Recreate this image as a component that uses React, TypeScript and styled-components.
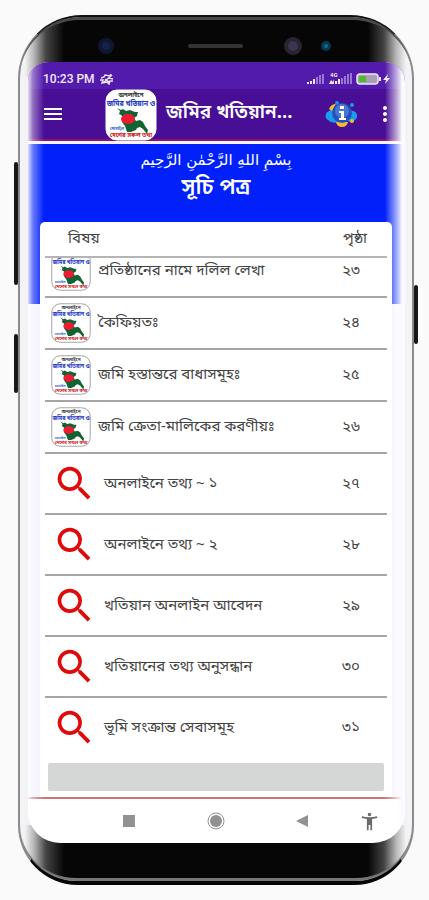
import React from "react";
import styled, { createGlobalStyle } from "styled-components";
import { MdSearch, MdMenu, MdMoreVert, MdAccessibilityNew } from "react-icons/md";

const GlobalStyle = createGlobalStyle`
  * { box-sizing: border-box; }
  body {
    margin: 0;
    background: #fafafa;
    font-family: "Noto Sans Bengali", "Noto Sans", "DejaVu Sans", sans-serif;
    color: #444;
  }
  button { border: 0; padding: 0; background: none; color: inherit; font: inherit; cursor: pointer; }
  svg { display: block; flex: none; }
`;

const Page = styled.main`
  min-height: 100vh;
  padding: 15px 15px 15px 18px;
`;

const Phone = styled.div`
  position: relative;
  display: flex;
  flex-direction: column;
  border: 2px solid #8a8a8a;
  border-top-color: #111;
  border-bottom: 4px solid #050505;
  border-radius: 64px 64px 60px 60px;
  background: #f3f3f6;
`;

const SideKey = styled.span<{ $side: "left" | "right"; $top: number; $length: number }>`
  position: absolute;
  ${(p) => p.$side}: -6px;
  top: ${(p) => p.$top}px;
  width: 4px;
  height: ${(p) => p.$length}px;
  border-radius: 2px;
  background: #181818;
`;

const bezelFade = "linear-gradient(90deg, #f3f3f6 0, #f3f3f6 5px, #b5b5b5 14px, #444 26px, #060606 44px, #060606 calc(100% - 44px), #444 calc(100% - 28px), #b5b5b5 calc(100% - 16px), #f3f3f6 calc(100% - 6px), #f3f3f6 100%)";

const TopBezel = styled.div`
  display: flex;
  align-items: center;
  justify-content: center;
  height: 60px;
  margin-bottom: -15px;
  padding-bottom: 6px;
  border-top: 3px solid #4a4a4a;
  border-radius: 62px 62px 0 0;
  background: ${bezelFade};
`;

const BottomBezel = styled.div`
  height: 56px;
  margin-top: -18px;
  border-bottom: 3px solid #777;
  border-radius: 0 0 56px 56px;
  background: ${bezelFade};
`;

const Screen = styled.div`
  position: relative;
  margin: 0 7px 0 8px;
  border-radius: 20px 20px 32px 32px;
  overflow: hidden;
  background: #fff;
  z-index: 1;
`;

const EdgeShine = styled.div`
  position: absolute;
  inset: 0;
  pointer-events: none;
  background: linear-gradient(90deg, rgba(255,255,255,.85) 0, rgba(255,255,255,.4) 5px, rgba(255,255,255,0) 16px, rgba(255,255,255,0) calc(100% - 20px), rgba(255,255,255,.7) calc(100% - 7px), #fafaff calc(100% - 3px));
`;

const StatusBar = styled.div`
  display: flex;
  align-items: center;
  justify-content: space-between;
  height: 27px;
  padding: 6px 14px 0 15px;
  background: #531bab;
  color: #f1e8fa;
  font: 500 12px/16px Roboto, sans-serif;
`;

const StatusGroup = styled.div`
  display: flex;
  align-items: center;
  gap: 4px;
`;

const AppBar = styled.header`
  display: flex;
  align-items: center;
  height: 50px;
  padding: 0 8px 0 13px;
  background: #480f96;
  color: #fff;
`;

const IconButton = styled.button`
  display: flex;
  align-items: center;
  justify-content: center;
  width: 24px;
  height: 40px;
`;

const BrandMark = styled.div`
  margin: 2px 9px 0 40px;
`;

const AppTitle = styled.h1`
  flex: 1;
  min-width: 0;
  margin: 0;
  font-size: 19px;
  line-height: 32px;
  font-weight: 600;
  white-space: nowrap;
`;

const InfoButton = styled(IconButton)`
  width: 32px;
  margin-right: 16px;
`;

const Content = styled.section`
  padding: 4px 13px 0 12px;
  border-top: 2px solid #8c1270;
  background: linear-gradient(#f4f4ff 3px, #0221fa 3px, #0221fa 163px, #f1f2ff 163px);
`;

const Intro = styled.div`
  height: 77px;
  padding-top: 4px;
  text-align: center;
  color: #fff;
`;

const Bismillah = styled.p`
  margin: 0;
  font: 15px/22px "DejaVu Sans", sans-serif;
`;

const PageTitle = styled.h2`
  margin: 0;
  font-size: 22px;
  line-height: 36px;
  font-weight: 600;
`;

const Card = styled.div`
  padding: 0 5px 6px;
  border-radius: 5px 5px 0 0;
  background: #fff;
`;

const TopicTable = styled.table`
  display: block;
  font-size: 15px;
  line-height: 24px;
`;

const TableHead = styled.thead`
  display: block;
  border-bottom: 2px solid #b5b5b5;
`;

const HeadRow = styled.tr`
  display: flex;
  align-items: center;
  height: 34px;
  padding-left: 23px;
`;

const HeadCell = styled.th<{ $page?: boolean }>`
  flex: ${(p) => (p.$page ? "0 0 44px" : "1")};
  padding: 0;
  text-align: left;
  font-weight: 400;
`;

const TableBody = styled.tbody`
  display: block;
  overflow: hidden;
`;

const Row = styled.tr<{ $tall: boolean }>`
  display: flex;
  align-items: center;
  height: ${(p) => (p.$tall ? 61 : 52)}px;
  padding-left: ${(p) => (p.$tall ? 7 : 6)}px;
  border-bottom: 2px solid #a5a5a5;
  &:first-child { margin-top: -12px; }
  &:last-child { border-color: transparent; }
`;

const TopicCell = styled.td`
  flex: 1;
  min-width: 0;
  padding: 0;
`;

const TopicLink = styled.a`
  display: flex;
  align-items: center;
  gap: 7px;
  color: inherit;
  text-decoration: none;
  white-space: nowrap;
`;

const PageCell = styled.td`
  flex: 0 0 45px;
  padding: 0;
`;

const Banner = styled.button`
  display: block;
  width: calc(100% - 6px);
  height: 28px;
  margin: 4px 3px 0;
  border-radius: 2px;
  background: #d5d7d6;
`;

const NavBar = styled.nav`
  display: flex;
  align-items: center;
  height: 46px;
  padding: 0 24px 0 89px;
  border-top: 2px solid #cf7474;
  color: #929292;
`;

const NavKeys = styled.div`
  flex: 1;
  display: flex;
  justify-content: space-between;
  margin-right: 43px;
`;

function LandLogo({ size, framed }: { size: number; framed?: boolean }) {
  return (
    <svg width={size} height={size} viewBox="0 0 52 52" aria-hidden="true">
      <rect x="1" y="1" width="50" height="50" rx="11" fill="#fff" stroke={framed ? "#888" : "#fff"} />
      <g textAnchor="middle" fontWeight="700">
        <text x="26" y="8" fontSize="6" fill="#333">অনলাইনে</text>
        <text x="26" y="17" fontSize="7" fill="#2338c8">জমির খতিয়ান ও</text>
        <text x="12" y="41" fontSize="4" fill="#2865c8">মোবাইল</text>
        <text x="26" y="48" fontSize="6" fill="#d11824">দেশের সকল তথ্য</text>
      </g>
      <path d="M12 19l4 2 2-1 3 2 4-1 5 2 3 0-1 4-3 2 2 3 4-1 3 2 2 4 3 4-1 4-4-5-3-2-3 1-1 2-5 2-4 0-2-6-3-4 2-4-3-3-2-1 1-3z" fill="#116332" />
      <ellipse cx="23" cy="30" rx="7" ry="5" fill="#ed1c32" />
    </svg>
  );
}

function InfoLogo() {
  return (
    <svg width="32" height="28" viewBox="0 0 32 28" aria-hidden="true">
      <path d="M3 20a5 5 0 0 1 1-9q4-3 7 1l2 10q-6 2-10-2z" fill="#179df0" />
      <path d="M30 20a5 5 0 0 0-2-9q-4-2-6 2v8q5 2 8-1z" fill="#179df0" />
      <path d="M4 9q2-5 7-5l-4 7zM11 22h12q-1 5-6 5t-6-5z" fill="#f2bd28" />
      <circle cx="27" cy="21" r="2" fill="#f2bd28" />
      <circle cx="12" cy="3" r="2" fill="#159be9" />
      <circle cx="27" cy="5" r="2" fill="#159be9" />
      <circle cx="17" cy="13" r="10" fill="#2750bd" />
      <circle cx="17" cy="11" r="7" fill="#5c91df" opacity=".6" />
      <path d="M15 6h4v3h-4zM14 11h5v7h2v2h-7v-2h2v-5h-2z" fill="#fff" />
    </svg>
  );
}

function CameraRow() {
  return (
    <svg width="240" height="24" viewBox="0 0 240 24" aria-hidden="true">
      <circle cx="10" cy="12" r="8" fill="#10162f" />
      <circle cx="10" cy="12" r="4" fill="#15204a" />
      <rect x="92" y="10" width="55" height="4" rx="2" fill="#333" />
      <circle cx="197" cy="12" r="9" fill="#29242f" />
      <circle cx="197" cy="12" r="5" fill="#3c3550" />
      <circle cx="230" cy="12" r="5" fill="#093950" />
      <circle cx="230" cy="12" r="2" fill="#126b94" />
    </svg>
  );
}

function VibrateIcon() {
  return (
    <svg width="16" height="12" viewBox="0 0 16 12" fill="none" stroke="#eee4f8" strokeWidth="1.5" aria-hidden="true">
      <path d="M2 5l3-1 1-2 5 1 1-2M1 7h3l-1 3 5-1 2 2 1-3h3M4 10l9-8M10 5l4 1M6 6l4 3" />
    </svg>
  );
}

function SignalIcons() {
  return (
    <svg width="84" height="14" viewBox="0 0 84 14" fill="#f0e6fa" aria-hidden="true">
      <path d="M0 12h2v-2h-2zM3 12h2v-3h-2zM6 12h2v-5h-2z" />
      <path d="M9 12h2v-7h-2zM12 12h2v-9h-2zM15 12h2v-10h-2z" opacity=".45" />
      <text x="23" y="5" fontSize="6" fontWeight="700">4G</text>
      <path d="M22 12l2-4 2 2 1-3v5zM28 12h2v-3h-2zM31 12h2v-5h-2z" />
      <path d="M34 12h2v-6h-2zM37 12h2v-8h-2zM40 12h2v-10h-2zM43 12h2v-11h-2z" opacity=".45" />
      <rect x="50" y="2" width="21" height="10" rx="3" fill="#a9a0b5" stroke="#f0e6fa" strokeWidth="1.5" />
      <rect x="52" y="4" width="7" height="6" rx="1" fill="#4cbb28" />
      <rect x="72" y="5" width="2" height="4" />
      <path d="M81 2l-5 6h3l-1 4 5-6h-3z" />
    </svg>
  );
}

const topics = [
  { title: "প্রতিষ্ঠানের নামে দলিল লেখা", page: "২৩" },
  { title: "কৈফিয়তঃ", page: "২৪" },
  { title: "জমি হস্তান্তরে বাধাসমূহঃ", page: "২৫" },
  { title: "জমি ক্রেতা-মালিকের করণীয়ঃ", page: "২৬" },
  { title: "অনলাইনে তথ্য ~ ১", page: "২৭", online: true },
  { title: "অনলাইনে তথ্য ~ ২", page: "২৮", online: true },
  { title: "খতিয়ান অনলাইন আবেদন", page: "২৯", online: true },
  { title: "খতিয়ানের তথ্য অনুসন্ধান", page: "৩০", online: true },
  { title: "ভূমি সংক্রান্ত সেবাসমূহ", page: "৩১", online: true },
];

export default function App() {
  return (
    <Page>
      <GlobalStyle />
      <Phone>
        <SideKey $side="left" $top={145} $length={123} />
        <SideKey $side="left" $top={317} $length={59} />
        <SideKey $side="right" $top={268} $length={59} />
        <TopBezel><CameraRow /></TopBezel>
        <Screen>
          <StatusBar>
            <StatusGroup>10:23 PM<VibrateIcon /></StatusGroup>
            <SignalIcons />
          </StatusBar>
          <AppBar>
            <IconButton aria-label="Menu"><MdMenu size={24} /></IconButton>
            <BrandMark><LandLogo size={52} /></BrandMark>
            <AppTitle>জমির খতিয়ান...</AppTitle>
            <InfoButton aria-label="Info"><InfoLogo /></InfoButton>
            <IconButton aria-label="More options"><MdMoreVert size={24} /></IconButton>
          </AppBar>
          <Content>
            <Intro>
              <Bismillah lang="ar" dir="rtl">بِسْمِ اللهِ الرَّحْمٰنِ الرَّحِيم</Bismillah>
              <PageTitle>সূচি পত্র</PageTitle>
            </Intro>
            <Card>
              <TopicTable>
                <TableHead>
                  <HeadRow>
                    <HeadCell scope="col">বিষয়</HeadCell>
                    <HeadCell scope="col" $page>পৃষ্ঠা</HeadCell>
                  </HeadRow>
                </TableHead>
                <TableBody>
                  {topics.map((t) => (
                    <Row key={t.page} $tall={!!t.online}>
                      <TopicCell>
                        <TopicLink href="#">
                          {t.online ? <MdSearch size={45} color="#df0b0b" /> : <LandLogo size={40} framed />}
                          {t.title}
                        </TopicLink>
                      </TopicCell>
                      <PageCell>{t.page}</PageCell>
                    </Row>
                  ))}
                </TableBody>
              </TopicTable>
              <Banner aria-label="Banner" />
            </Card>
          </Content>
          <NavBar aria-label="System">
            <NavKeys>
              <IconButton aria-label="Recent apps">
                <svg width="12" height="12" viewBox="0 0 12 12"><rect width="12" height="12" fill="currentColor" /></svg>
              </IconButton>
              <IconButton aria-label="Home">
                <svg width="18" height="18" viewBox="0 0 18 18">
                  <circle cx="9" cy="9" r="8" fill="none" stroke="currentColor" />
                  <circle cx="9" cy="9" r="6" fill="currentColor" />
                </svg>
              </IconButton>
              <IconButton aria-label="Back">
                <svg width="12" height="12" viewBox="0 0 12 12"><path d="M0 6l12-6v12z" fill="currentColor" /></svg>
              </IconButton>
            </NavKeys>
            <IconButton aria-label="Accessibility"><MdAccessibilityNew size={21} color="#6b6b6b" /></IconButton>
          </NavBar>
          <EdgeShine />
        </Screen>
        <BottomBezel />
      </Phone>
    </Page>
  );
}
